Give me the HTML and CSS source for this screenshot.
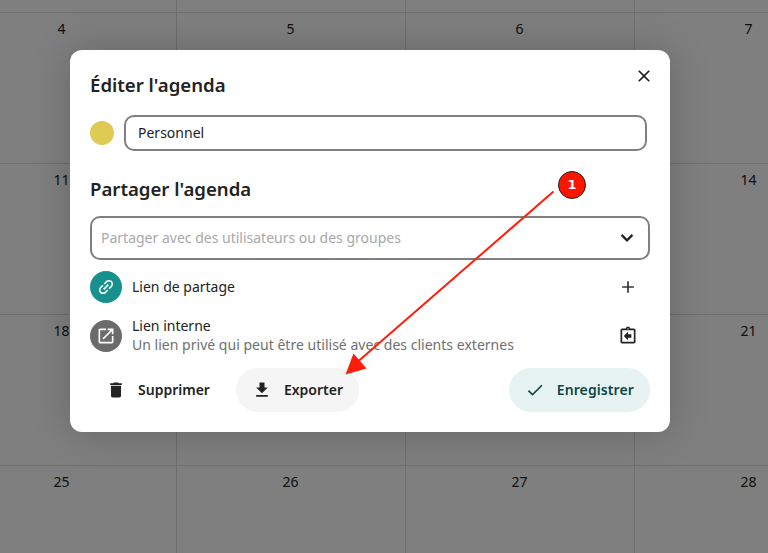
FILE: index.html
```html
<!DOCTYPE html>
<html lang="fr">
<head>
<meta charset="utf-8">
<title>Éditer l'agenda</title>
<link rel="stylesheet" href="styles.css">
</head>
<body>
<div class="viewport">
<div class="calendar">
  <div class="cell"></div><div class="cell"></div><div class="cell"></div><div class="cell"></div>
  <div class="cell"><span>4</span></div><div class="cell"><span>5</span></div><div class="cell"><span>6</span></div><div class="cell"><span>7</span></div>
  <div class="cell"><span>11</span></div><div class="cell"></div><div class="cell"></div><div class="cell"><span>14</span></div>
  <div class="cell"><span>18</span></div><div class="cell"></div><div class="cell"></div><div class="cell"><span>21</span></div>
  <div class="cell"><span>25</span></div><div class="cell"><span>26</span></div><div class="cell"><span>27</span></div><div class="cell"><span>28</span></div>
</div>
</div>
<div class="backdrop"></div>
<div class="modal">
  <button class="close" aria-label="Fermer">
    <svg width="20" height="20" viewBox="0 0 24 24"><path d="M19 6.41 17.59 5 12 10.59 6.41 5 5 6.41 10.59 12 5 17.59 6.41 19 12 13.41 17.59 19 19 17.59 13.41 12z"/></svg>
  </button>
  <h2 class="title">Éditer l'agenda</h2>
  <div class="name-row">
    <span class="dot"></span>
    <div class="field name-field">Personnel</div>
  </div>
  <h2 class="title share-title">Partager l'agenda</h2>
  <div class="field select-field">
    <span class="placeholder">Partager avec des utilisateurs ou des groupes</span>
    <svg width="24" height="24" viewBox="0 0 24 24"><path d="M7.41 8.3 12 12.9l4.59-4.6L18 9.7l-6 6-6-6z" stroke="#222" stroke-width=".5"/></svg>
  </div>
  <div class="row row-share">
    <span class="avatar teal">
      <svg width="20" height="20" viewBox="0 0 24 24"><path fill="#fff" transform="rotate(-45 12 12)" d="M3.9 12c0-1.71 1.39-3.1 3.1-3.1h4V7H7c-2.76 0-5 2.24-5 5s2.24 5 5 5h4v-1.9H7c-1.71 0-3.1-1.39-3.1-3.1zM8 13h8v-2H8zm9-6h-4v1.9h4c1.71 0 3.1 1.39 3.1 3.1s-1.39 3.1-3.1 3.1h-4V17h4c2.76 0 5-2.24 5-5s-2.24-5-5-5z"/></svg>
    </span>
    <span class="row-text">Lien de partage</span>
    <svg class="row-action" width="20" height="20" viewBox="0 0 24 24"><path d="M19 13h-6v6h-2v-6H5v-2h6V5h2v6h6z" fill="#333"/></svg>
  </div>
  <div class="row row-internal">
    <span class="avatar gray">
      <svg width="20" height="20" viewBox="0 0 24 24"><path fill="#fff" d="M19 19H5V5h7V3H5a2 2 0 0 0-2 2v14a2 2 0 0 0 2 2h14c1.1 0 2-.9 2-2v-7h-2zM14 3v2h3.59l-9.83 9.83 1.41 1.41L19 6.41V10h2V3z"/></svg>
    </span>
    <span class="row-text">Lien interne<small>Un lien privé qui peut être utilisé avec des clients externes</small></span>
    <svg class="row-action" width="20" height="20" viewBox="0 0 24 24"><path fill="#222" d="M19 3h-4.18C14.4 1.84 13.3 1 12 1s-2.4.84-2.82 2H5c-1.1 0-2 .9-2 2v14c0 1.1.9 2 2 2h14c1.1 0 2-.9 2-2V5c0-1.1-.9-2-2-2zm-7-.25c.41 0 .75.34.75.75s-.34.75-.75.75-.75-.34-.75-.75.34-.75.75-.75zM19 19H5V5h14zM12 7l-5 5 5 5v-3h4v-4h-4z"/></svg>
  </div>
  <div class="actions">
    <button class="btn btn-plain">
      <svg width="20" height="20" viewBox="0 0 24 24"><path d="M6 19c0 1.1.9 2 2 2h8c1.1 0 2-.9 2-2V7H6zM19 4h-3.5l-1-1h-5l-1 1H5v2h14z"/></svg>
      <span>Supprimer</span>
    </button>
    <button class="btn btn-soft">
      <svg width="20" height="20" viewBox="0 0 24 24"><path d="M5 20h14v-2H5zM19 9h-4V3H9v6H5l7 7z"/></svg>
      <span>Exporter</span>
    </button>
    <button class="btn btn-primary">
      <svg width="20" height="20" viewBox="0 0 24 24"><path d="M9 16.17 4.83 12l-1.42 1.41L9 19 21 7l-1.41-1.41z"/></svg>
      <span>Enregistrer</span>
    </button>
  </div>
</div>
<svg class="arrow" width="768" height="553" viewBox="0 0 768 553">
  <line x1="553.5" y1="191.5" x2="358" y2="361.5" stroke="#ff1e0a" stroke-width="2"/>
  <path d="M345.5 374.5 353.5 353.5 366.5 368.5z" fill="#ff1e0a"/>
</svg>
<span class="badge">1</span>
</body>
</html>
```
FILE: styles.css
```css
* { box-sizing: border-box; }
html, body { margin: 0; height: 100%; }
body {
  width: 768px;
  height: 553px;
  overflow: hidden;
  position: relative;
  background: #fff;
  font-family: "Noto Sans", sans-serif;
  color: #222;
}
.viewport {
  width: 768px;
  height: 553px;
  overflow: hidden;
}
.calendar {
  display: grid;
  grid-template-columns: repeat(4, 229px);
  grid-template-rows: 13px repeat(3, 151px) 100px;
  margin: 0 0 0 -52px;
  width: 916px;
}
.cell {
  border-right: 1px solid #ddd;
  border-bottom: 1px solid #ddd;
  padding: 6px 1px 0 0;
  text-align: center;
  font-size: 14px;
  line-height: 20px;
  color: #222;
}
.backdrop {
  position: absolute;
  inset: 0;
  background: rgba(0, 0, 0, .5);
}
.modal {
  position: absolute;
  left: 70px;
  top: 50px;
  width: 600px;
  height: 382px;
  background: #fff;
  border-radius: 12px;
  box-shadow: 0 0 40px rgba(0, 0, 0, .2);
  padding: 22px 20px 0;
  display: flex;
  flex-direction: column;
}
.close {
  position: absolute;
  top: 14px;
  right: 14px;
  width: 24px;
  height: 24px;
  padding: 0;
  border: 0;
  background: none;
  fill: #222;
  display: flex;
  align-items: center;
  justify-content: center;
}
.title {
  margin: 0;
  font-size: 18.6px;
  line-height: 26px;
  font-weight: 600;
  color: #222;
}
.name-row {
  display: flex;
  align-items: center;
  gap: 10px;
  margin-top: 17px;
  margin-right: 3px;
}
.dot {
  width: 24px;
  height: 24px;
  border-radius: 50%;
  background: #dfcb54;
  flex: none;
}
.field {
  border: 2px solid #7f7f7f;
  border-radius: 10px;
  background: #fff;
}
.name-field {
  flex: 1;
  height: 36px;
  padding: 0 12px;
  font-size: 14px;
  line-height: 32px;
  color: #222;
}
.share-title { margin-top: 25px; }
.select-field {
  display: flex;
  align-items: center;
  justify-content: space-between;
  height: 44px;
  margin-top: 14px;
  padding: 0 9px;
  fill: #222;
}
.placeholder {
  font-size: 14px;
  line-height: 20px;
  color: #a8a8a8;
}
.row {
  display: flex;
  align-items: center;
  gap: 10px;
  height: 32px;
  padding-right: 12px;
}
.row-share { margin-top: 11px; }
.row-internal { margin-top: 17px; }
.avatar {
  width: 32px;
  height: 32px;
  border-radius: 50%;
  flex: none;
  display: flex;
  align-items: center;
  justify-content: center;
}
.teal { background: #17918d; }
.gray { background: #6b6b6b; }
.row-text {
  flex: 1;
  font-size: 14px;
  line-height: 19px;
  padding-bottom: 2px;
  color: #222;
}
.row-text small {
  display: block;
  font-size: 14px;
  letter-spacing: .02px;
  color: #6f6f6f;
}
.row-action { flex: none; }
.actions {
  display: flex;
  align-items: center;
  margin-top: 16px;
}
.btn {
  display: flex;
  align-items: center;
  gap: 12px;
  height: 44px;
  padding: 0 16px;
  border: 0;
  border-radius: 22px;
  font: 600 14px/20px "Noto Sans", sans-serif;
  color: #222;
  fill: #222;
  background: none;
}
.btn span { margin-top: -1px; }
.btn-soft { background: #f5f5f5; margin-left: 10px; }
.btn-primary {
  margin-left: auto;
  padding-right: 16px;
  background: #e7f3f3;
  color: #0e4645;
  fill: #0e4645;
}
.btn-primary span { letter-spacing: .1px; }
.arrow {
  position: absolute;
  inset: 0;
  pointer-events: none;
}
.badge {
  position: absolute;
  left: 558px;
  top: 171px;
  width: 28px;
  height: 28px;
  border-radius: 50%;
  background: #fb1600;
  border: 1px solid #222;
  color: #fff;
  font: 700 13px/26px "DejaVu Sans", sans-serif;
  text-align: center;
}
```
